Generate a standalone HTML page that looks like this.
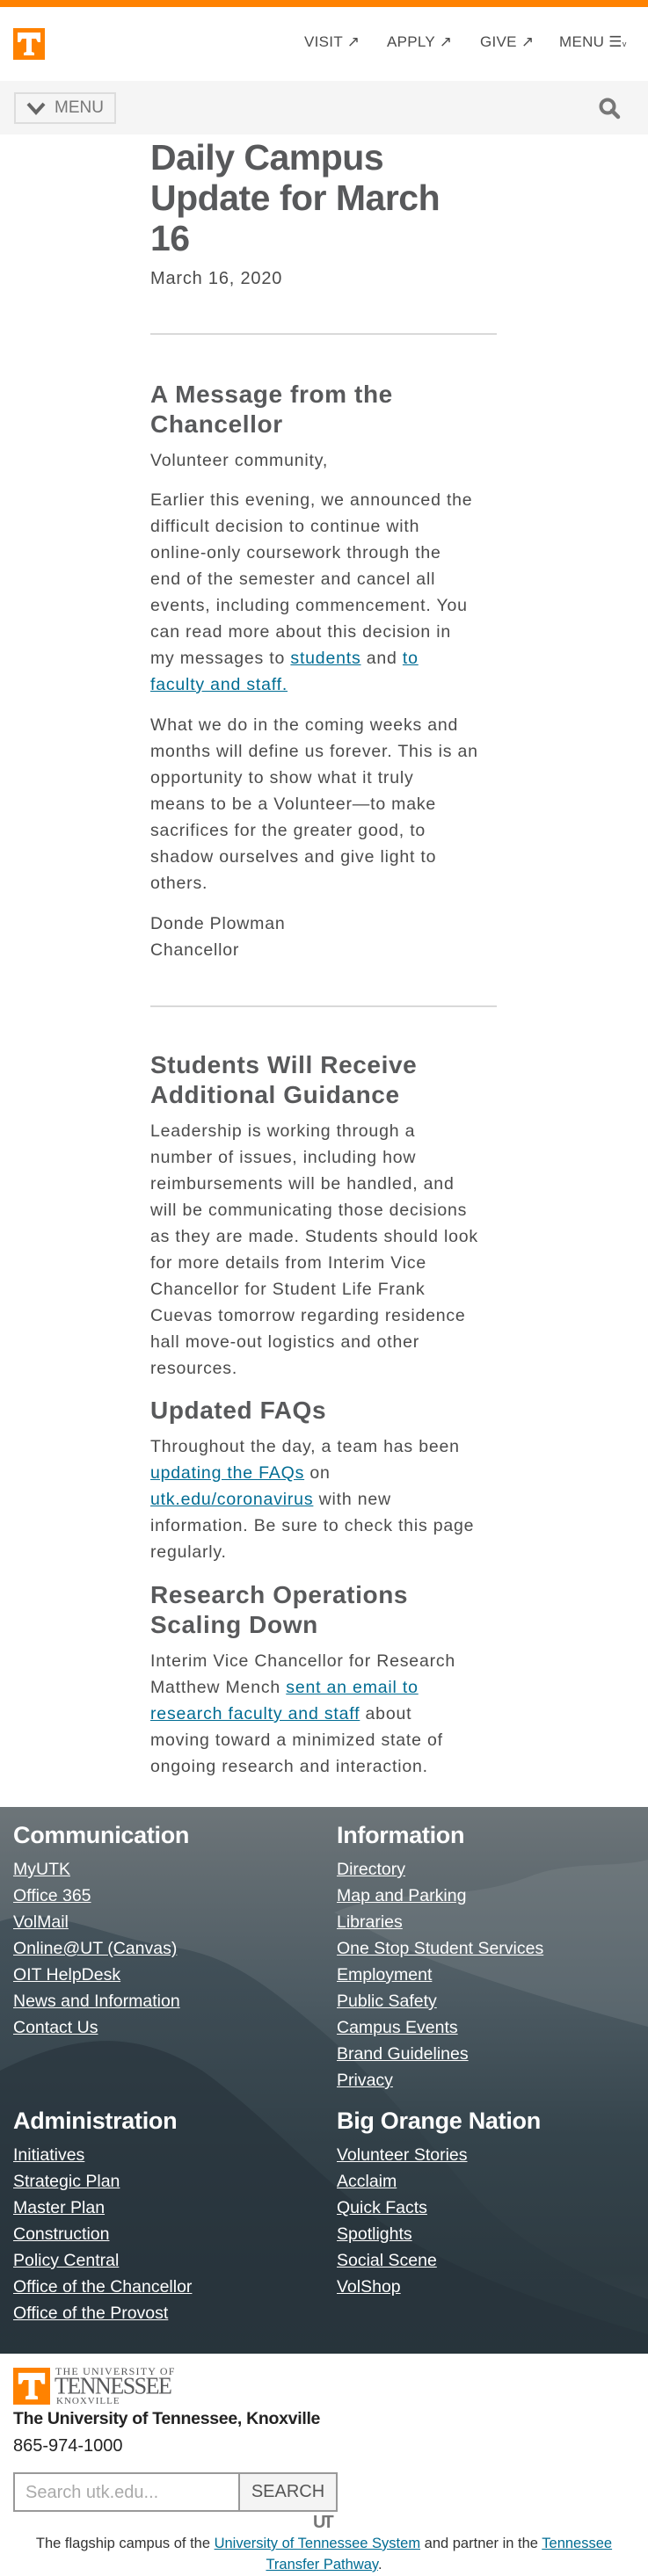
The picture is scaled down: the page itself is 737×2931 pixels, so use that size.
<!DOCTYPE html>
<html><head><meta charset="utf-8">
<style>
*{margin:0;padding:0;box-sizing:border-box}
html,body{width:737px;height:2931px;background:#fff;overflow:hidden}
body{position:relative;font-family:"Liberation Sans",sans-serif;color:#4b4b4b}
.a{position:absolute}
.nav{font-size:17px;color:#4b4b4b;top:38px;letter-spacing:0.3px}
h1{position:absolute;left:171px;top:156px;font-size:41px;line-height:46px;font-weight:bold;color:#58595b;letter-spacing:-0.5px;white-space:nowrap}
.hr{position:absolute;left:171px;width:394px;height:2px;background:#d9d9d9}
.h2{position:absolute;left:171px;font-weight:bold;color:#58595b;font-size:28px;line-height:34px;letter-spacing:0.6px;white-space:nowrap}
.p{position:absolute;left:171px;font-size:19.5px;line-height:30px;letter-spacing:0.8px;color:#4b4b4b;white-space:nowrap}
.p a{color:#006c93;text-decoration:underline}
.foot{position:absolute;left:0;top:2056px;width:737px;height:622px;overflow:hidden;
background:linear-gradient(180deg,#6d7579 0%,#4c5a62 35%,#35444c 60%,#2e3b42 85%,#36434a 100%)}
.fh{position:absolute;color:#fff;font-weight:bold;font-size:27px;letter-spacing:-0.3px;line-height:30px}
.fl{position:absolute;color:#fff;font-size:19.5px;line-height:30px}
.fl a{color:#fff;text-decoration:underline;display:block}
</style></head><body>
<div class="a" style="left:0;top:0;width:737px;height:8px;background:#ff8200"></div>
<div class="a" style="left:15px;top:32px;width:36px;height:36px;background:#ff8200">
<svg width="36" height="36" viewBox="0 0 36 36"><path d="M5 5h26v11h-3l-2-4h-5v15l3 1v3H12v-3l3-1V12h-5l-2 4H5z" fill="#fff"/></svg></div>
<div class="a nav" style="left:346px">VISIT ↗</div>
<div class="a nav" style="left:440px">APPLY ↗</div>
<div class="a nav" style="left:546px">GIVE ↗</div>
<div class="a nav" style="left:636px">MENU ☰<span style="font-size:9px">v</span></div>
<div class="a" style="left:0;top:92px;width:737px;height:61px;background:#f5f5f5"></div>
<div class="a" style="left:16px;top:105px;width:116px;height:36px;border:2px solid #ddd;color:#777;font-size:19px;line-height:32px;padding-left:44px">MENU</div>
<svg class="a" style="left:29px;top:114px" width="24" height="18" viewBox="0 0 24 18"><path d="M3 4l9 10 9-10" stroke="#666" stroke-width="4" fill="none"/></svg>
<svg class="a" style="left:680px;top:110px" width="28" height="28" viewBox="0 0 28 28"><circle cx="11" cy="11" r="7.5" stroke="#777" stroke-width="4" fill="none"/><path d="M16 16l7 7" stroke="#777" stroke-width="4.5" stroke-linecap="round"/></svg>

<h1>Daily Campus<br>Update for March<br>16</h1>
<div class="p" style="top:302px;font-size:20px">March 16, 2020</div>
<div class="hr" style="top:379px"></div>

<div class="h2" style="top:432px">A Message from the<br>Chancellor</div>
<div class="p" style="top:509px">Volunteer community,</div>
<div class="p" style="top:554px">Earlier this evening, we announced the<br>difficult decision to continue with<br>online-only coursework through the<br>end of the semester and cancel all<br>events, including commencement. You<br>can read more about this decision in<br>my messages to <a>students</a> and <a>to</a><br><a>faculty and staff.</a></div>
<div class="p" style="top:810px">What we do in the coming weeks and<br>months will define us forever. This is an<br>opportunity to show what it truly<br>means to be a Volunteer—to make<br>sacrifices for the greater good, to<br>shadow ourselves and give light to<br>others.</div>
<div class="p" style="top:1036px">Donde Plowman<br>Chancellor</div>
<div class="hr" style="top:1144px"></div>

<div class="h2" style="top:1195px">Students Will Receive<br>Additional Guidance</div>
<div class="p" style="top:1272px">Leadership is working through a<br>number of issues, including how<br>reimbursements will be handled, and<br>will be communicating those decisions<br>as they are made. Students should look<br>for more details from Interim Vice<br>Chancellor for Student Life Frank<br>Cuevas tomorrow regarding residence<br>hall move-out logistics and other<br>resources.</div>
<div class="h2" style="top:1588px">Updated FAQs</div>
<div class="p" style="top:1631px">Throughout the day, a team has been<br><a>updating the FAQs</a> on<br><a>utk.edu/coronavirus</a> with new<br>information. Be sure to check this page<br>regularly.</div>
<div class="h2" style="top:1798px">Research Operations<br>Scaling Down</div>
<div class="p" style="top:1875px">Interim Vice Chancellor for Research<br>Matthew Mench <a>sent an email to</a><br><a>research faculty and staff</a> about<br>moving toward a minimized state of<br>ongoing research and interaction.</div>

<div class="foot">
<svg class="a" style="left:0;top:0" width="737" height="622" viewBox="0 0 737 622">
<defs><linearGradient id="m" x1="0" y1="0" x2="0" y2="1"><stop offset="0" stop-color="#3e4d56"/><stop offset="1" stop-color="#26333a"/></linearGradient></defs>
<path d="M0 130 C60 110 120 150 200 160 C260 170 300 200 360 250 C420 300 470 360 520 420 C560 470 620 520 737 560 L737 622 L0 622Z" fill="url(#m)" opacity="0.75"/>
<path d="M0 300 C80 260 150 250 230 300 C300 350 360 420 430 470 C500 520 600 560 737 600 L737 622 L0 622Z" fill="#26323a" opacity="0.6"/>
<path d="M380 120 C450 90 520 110 600 80 C650 60 700 70 737 60 L737 250 C660 230 560 200 480 170Z" fill="#8a9499" opacity="0.25"/>
</svg>
<div class="fh" style="left:15px;top:17px">Communication</div>
<div class="fl" style="left:15px;top:56px"><a>MyUTK</a><a>Office 365</a><a>VolMail</a><a>Online@UT (Canvas)</a><a>OIT HelpDesk</a><a>News and Information</a><a>Contact Us</a></div>
<div class="fh" style="left:383px;top:17px">Information</div>
<div class="fl" style="left:383px;top:56px"><a>Directory</a><a>Map and Parking</a><a>Libraries</a><a>One Stop Student Services</a><a>Employment</a><a>Public Safety</a><a>Campus Events</a><a>Brand Guidelines</a><a>Privacy</a></div>
<div class="fh" style="left:15px;top:342px">Administration</div>
<div class="fl" style="left:15px;top:381px"><a>Initiatives</a><a>Strategic Plan</a><a>Master Plan</a><a>Construction</a><a>Policy Central</a><a>Office of the Chancellor</a><a>Office of the Provost</a></div>
<div class="fh" style="left:383px;top:342px">Big Orange Nation</div>
<div class="fl" style="left:383px;top:381px"><a>Volunteer Stories</a><a>Acclaim</a><a>Quick Facts</a><a>Spotlights</a><a>Social Scene</a><a>VolShop</a></div>
</div>

<div class="a" style="left:15px;top:2694px;width:42px;height:42px;background:#ff8200">
<svg width="42" height="42" viewBox="0 0 36 36"><path d="M5 5h26v11h-3l-2-4h-5v15l3 1v3H12v-3l3-1V12h-5l-2 4H5z" fill="#fff"/></svg></div>
<div class="a" style="left:63px;top:2692px;font-family:'Liberation Serif',serif;color:#58595b;font-size:12px;letter-spacing:1.2px;line-height:13px">THE UNIVERSITY OF</div>
<div class="a" style="left:62px;top:2702px;font-family:'Liberation Serif',serif;color:#58595b;font-size:26px;line-height:26px;letter-spacing:-1.5px;transform:scaleY(1.05)">TENNESSEE</div>
<div class="a" style="left:64px;top:2726px;font-family:'Liberation Serif',serif;color:#58595b;font-size:11px;letter-spacing:1px;line-height:12px">KNOXVILLE</div>
<div class="a" style="left:15px;top:2740px;font-weight:bold;color:#222;font-size:19.5px;line-height:24px;letter-spacing:-0.3px">The University of Tennessee, Knoxville</div>
<div class="a" style="left:15px;top:2771px;color:#222;font-size:20px;line-height:24px">865-974-1000</div>
<div class="a" style="left:15px;top:2813px;width:369px;height:45px;border:2px solid #999;background:#fff"></div>
<div class="a" style="left:29px;top:2824px;color:#aaa;font-size:20px;line-height:24px">Search utk.edu...</div>
<div class="a" style="left:271px;top:2813px;width:113px;height:45px;border:2px solid #999;background:#f4f4f4;color:#555;font-size:20px;line-height:41px;text-align:center">SEARCH</div>
<div class="a" style="left:356px;top:2860px;font-weight:bold;color:#777;font-size:20px;line-height:20px;letter-spacing:-3px">UT</div>
<div class="a" style="left:0;top:2882px;width:737px;text-align:center;color:#333;font-size:16.5px;line-height:24px">The flagship campus of the <a style="color:#006c93;text-decoration:underline">University of Tennessee System</a> and partner in the <a style="color:#006c93;text-decoration:underline">Tennessee</a><br><a style="color:#006c93;text-decoration:underline">Transfer Pathway</a>.</div>
</body></html>
